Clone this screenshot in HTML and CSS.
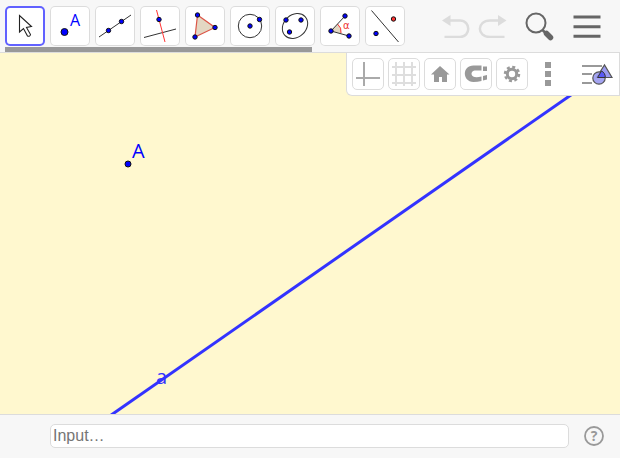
FILE: index.html
```html
<!DOCTYPE html>
<html lang="en">
<head>
<meta charset="utf-8">
<title>Geometry</title>
<link rel="stylesheet" href="styles.css">
</head>
<body>
<div class="app">
  <header class="toolbar">
    <nav class="tools" aria-label="Tools">
      <button class="tool selected" aria-label="Move"><svg viewBox="0 0 40 40"><path d="M14.500 9.500v16.500l4-3.500 4 7.500q2.500 1 3-1.500l-4-7 5-1z" fill="#fff" stroke="#222" stroke-width="1.100"/></svg></button>
      <button class="tool" aria-label="Point"><svg viewBox="0 0 40 40"><circle class="pt" cx="14.500" cy="26" r="3.500"/><text class="letter" x="20" y="20">A</text></svg></button>
      <button class="tool" aria-label="Line"><svg viewBox="0 0 40 40"><path class="ln" d="M4 31 36 9"/><circle class="pt" cx="13.500" cy="24.500" r="2.200"/><circle class="pt" cx="26.500" cy="15.500" r="2.200"/></svg></button>
      <button class="tool" aria-label="Perpendicular line"><svg viewBox="0 0 40 40"><path class="ln" d="M4 31.500 36 23"/><path class="red" d="m16.500 4 8.500 32"/><circle class="pt" cx="19" cy="13.500" r="2.200"/></svg></button>
      <button class="tool" aria-label="Polygon"><svg viewBox="0 0 40 40"><path d="m12.500 9 17.500 12.500L10 31z" fill="#e3d7c3" stroke="#dc5547" stroke-width="1.200"/><circle class="pt" cx="12.500" cy="9" r="2.200"/><circle class="pt" cx="30" cy="21.500" r="2.200"/><circle class="pt" cx="10" cy="31" r="2.200"/></svg></button>
      <button class="tool" aria-label="Circle"><svg viewBox="0 0 40 40"><circle class="ln" cx="20" cy="20" r="11.700"/><circle class="pt" cx="20" cy="20" r="2.200"/><circle class="pt" cx="29.500" cy="13.500" r="2.200"/></svg></button>
      <button class="tool" aria-label="Ellipse"><svg viewBox="0 0 40 40"><ellipse class="ln" cx="20" cy="20" rx="13.800" ry="11.200" transform="rotate(-43 20 20)"/><circle class="pt" cx="11" cy="14" r="2.200"/><circle class="pt" cx="26" cy="14" r="2.200"/><circle class="pt" cx="14.500" cy="26" r="2.200"/></svg></button>
      <button class="tool" aria-label="Angle"><svg viewBox="0 0 40 40"><path d="m11 25 6.500-7a10 10 0 0 1 3.500 9.200z" fill="#e3d7c3"/><path class="red" d="M17.500 18a10 10 0 0 1 3.500 9.200"/><path class="ln" d="M25 10 11 25l18 5"/><circle class="pt" cx="25" cy="10" r="2.200"/><circle class="pt" cx="11" cy="25" r="2.200"/><circle class="pt" cx="29" cy="30" r="2.200"/><text class="alpha" x="23" y="23">α</text></svg></button>
      <button class="tool" aria-label="Reflect"><svg viewBox="0 0 40 40"><path class="ln" d="m6.500 4.500 27 31.500"/><circle class="pt" cx="11" cy="27.500" r="2.200"/><circle class="pt reflected" cx="28.500" cy="13" r="2.200"/></svg></button>
    </nav>
    <div class="actions">
      <button class="plain undo" aria-label="Undo" disabled><svg viewBox="0 0 30 24"><path d="M8 6.500h10c11 0 11 16.500 0 16.500H2.500" fill="none" stroke="#dcdcdc" stroke-width="2.500"/><path d="M0 6.500 8.500 1v11z" fill="#dcdcdc"/></svg></button>
      <button class="plain redo" aria-label="Redo" disabled><svg viewBox="0 0 30 24"><path d="M20 6.500H12C-1.500 6.500-1.500 23 12 23h14.500" fill="none" stroke="#dcdcdc" stroke-width="2.500"/><path d="M28.500 6.500 20 1v11z" fill="#dcdcdc"/></svg></button>
      <button class="plain search" aria-label="Search"><svg viewBox="0 0 30 30"><circle cx="11" cy="12" r="9.500" fill="none" stroke="#666" stroke-width="2"/><path d="m17.500 19 4 4" stroke="#666" stroke-width="2.500"/><path d="m21.500 22.500 4 4" stroke="#666" stroke-width="5.500" stroke-linecap="round"/></svg></button>
      <button class="plain menu" aria-label="Menu"><svg viewBox="0 0 28 24"><path d="M.5 3h27M.5 12.700h27M.5 22.300h27" stroke="#666" stroke-width="3"/></svg></button>
    </div>
  </header>

  <main class="view">
    <svg class="plane" role="img" aria-label="Graphics view">
      <line x1="-31" y1="461" x2="1009" y2="-263" stroke="#3333ff" stroke-width="3"/>
      <text class="label line-label" x="156" y="331">a</text>
      <circle cx="128" cy="111" r="3" fill="#00f" stroke="#111" stroke-width="1"/>
      <text class="label" x="132" y="105">A</text>
    </svg>
    <div class="stylebar">
      <button class="opt" aria-label="Axes"><svg viewBox="0 0 30 30"><path d="M11 3v24M3 19h24" stroke="#aaa" stroke-width="2"/></svg></button>
      <button class="opt" aria-label="Grid"><svg viewBox="0 0 30 30"><path d="M7 3v24M15 3v24M23 3v24M3 8h24M3 16h24M3 24h24" stroke="#dedede" stroke-width="2"/></svg></button>
      <button class="opt" aria-label="Standard view"><svg viewBox="0 0 30 30"><path d="m15 7 9.500 8.500H22V23h-5v-5h-3v5H9v-7.500H6z" fill="#999"/></svg></button>
      <button class="opt" aria-label="Snap to grid"><svg viewBox="0 0 30 30"><path d="M20.500 6.500H12.500C1 6.500 1 22.500 12.500 23q4 0 8-1v-4.500q-4 1-7 .5c-4-.5-4-6 0-6.500h7zM22 7.500h4V12h-4zM22 17l4-1v4.500l-4 1z" fill="#999"/></svg></button>
      <button class="opt" aria-label="Settings"><svg viewBox="0 0 30 30"><circle cx="15" cy="15" r="4.700" fill="none" stroke="#999" stroke-width="3"/><circle cx="15" cy="15" r="7" fill="none" stroke="#999" stroke-width="2.500" stroke-dasharray="3 2.500"/></svg></button>
      <button class="plain dots" aria-label="More"><svg viewBox="0 0 6 24"><path d="M0 0h6v6H0zM0 9h6v6H0zM0 18h6v6H0z" fill="#999"/></svg></button>
      <button class="plain algebra" aria-label="Algebra view"><svg viewBox="0 0 32 24"><path d="M1 4h20M1 12h10M1 21h10" stroke="#999" stroke-width="2"/><path d="M15.500 15.500 23.500 3l7.500 12.500z" fill="#9a9af0" stroke="#555" stroke-width="1.200"/><circle cx="18" cy="16" r="6.200" fill="#9a9af0" fill-opacity=".9" stroke="#555" stroke-width="1.200"/><path d="m16.500 15.500 4-6.500q4 2 3.700 6.500z" fill="#5959f5" stroke="#333"/></svg></button>
    </div>
  </main>

  <footer class="inputbar">
    <input class="command" type="text" placeholder="Input…" aria-label="Input">
    <button class="plain help" aria-label="Help"><svg viewBox="0 0 20 20"><circle cx="10" cy="10" r="9" fill="none" stroke="#999" stroke-width="1.800"/><text class="question" x="10" y="15" text-anchor="middle">?</text></svg></button>
  </footer>
</div>
</body>
</html>
```

FILE: styles.css
```css
* {
  box-sizing: border-box;
}

body {
  margin: 0;
  background: #fff;
  font-family: "Liberation Sans", Arial, sans-serif;
}

.app {
  display: flex;
  flex-direction: column;
  height: 100vh;
  padding: 0 1px 1px 0;
}

button {
  flex: none;
  padding: 0;
  border: 0;
  background: none;
}

button svg {
  display: block;
  width: 100%;
  height: 100%;
}

.toolbar {
  display: flex;
  justify-content: space-between;
  background: #f7f7f7;
  border-bottom: 1px solid #dcdcdc;
}

.tools {
  display: flex;
  gap: 5px;
  margin-left: 5px;
  padding: 6px 0;
  background: linear-gradient(#999, #999) left bottom / 307px 5px no-repeat;
}

.tool {
  width: 40px;
  height: 40px;
  border-radius: 5px;
  background: #fff;
  box-shadow: inset 0 0 0 1px #dcdcdc;
}

.tool.selected {
  box-shadow: inset 0 0 0 2px #6161ff;
}

.pt {
  fill: #00f;
  stroke: #111;
  stroke-width: 1;
}

.reflected {
  fill: #f33;
}

.ln {
  fill: none;
  stroke: #333;
  stroke-width: 1;
}

.red {
  fill: none;
  stroke: #f33;
  stroke-width: 1;
}

.letter {
  fill: #00f;
  font: 16px "Open Sans", sans-serif;
}

.alpha {
  fill: #e33;
  font: 10px "DejaVu Sans", sans-serif;
}

.actions {
  display: flex;
  align-items: center;
  padding-right: 19px;
}

.undo,
.redo {
  width: 30px;
  height: 24px;
}

.redo {
  margin-left: 6px;
}

.search {
  width: 30px;
  height: 30px;
  margin-left: 17px;
}

.menu {
  width: 28px;
  height: 24px;
  margin-left: 18px;
}

.view {
  position: relative;
  flex: 1;
  min-height: 0;
  background: #fff8cf;
}

.plane {
  display: block;
  width: 100%;
  height: 100%;
}

.label {
  fill: #00f;
  font: 20px "Open Sans", sans-serif;
}

.line-label {
  fill: #33f;
}

.stylebar {
  position: absolute;
  top: 0;
  right: 0;
  display: flex;
  align-items: center;
  gap: 4px;
  padding: 5px 6px 5px 5px;
  background: #fff;
  border: 1px solid #dcdcdc;
  border-top: 0;
  border-bottom-left-radius: 6px;
}

.opt {
  width: 32px;
  height: 32px;
  border: 1px solid #dcdcdc;
  border-radius: 5px;
  background: #fff;
}

.dots {
  width: 6px;
  height: 24px;
  margin-left: 13px;
}

.algebra {
  width: 32px;
  height: 24px;
  margin-left: 26px;
}

.inputbar {
  display: flex;
  align-items: center;
  gap: 15px;
  padding: 9px 16px 10px 50px;
  background: #f7f7f7;
  border-top: 1px solid #dcdcdc;
}

.command {
  flex: 1;
  min-width: 0;
  height: 24px;
  padding: 0 2px;
  border: 1px solid #dcdcdc;
  border-radius: 5px;
  background: #fff;
  font: 16px "Liberation Sans", Arial, sans-serif;
}

.help {
  width: 20px;
  height: 20px;
}

.question {
  fill: #999;
  font: bold 14px "Open Sans", sans-serif;
}
```
